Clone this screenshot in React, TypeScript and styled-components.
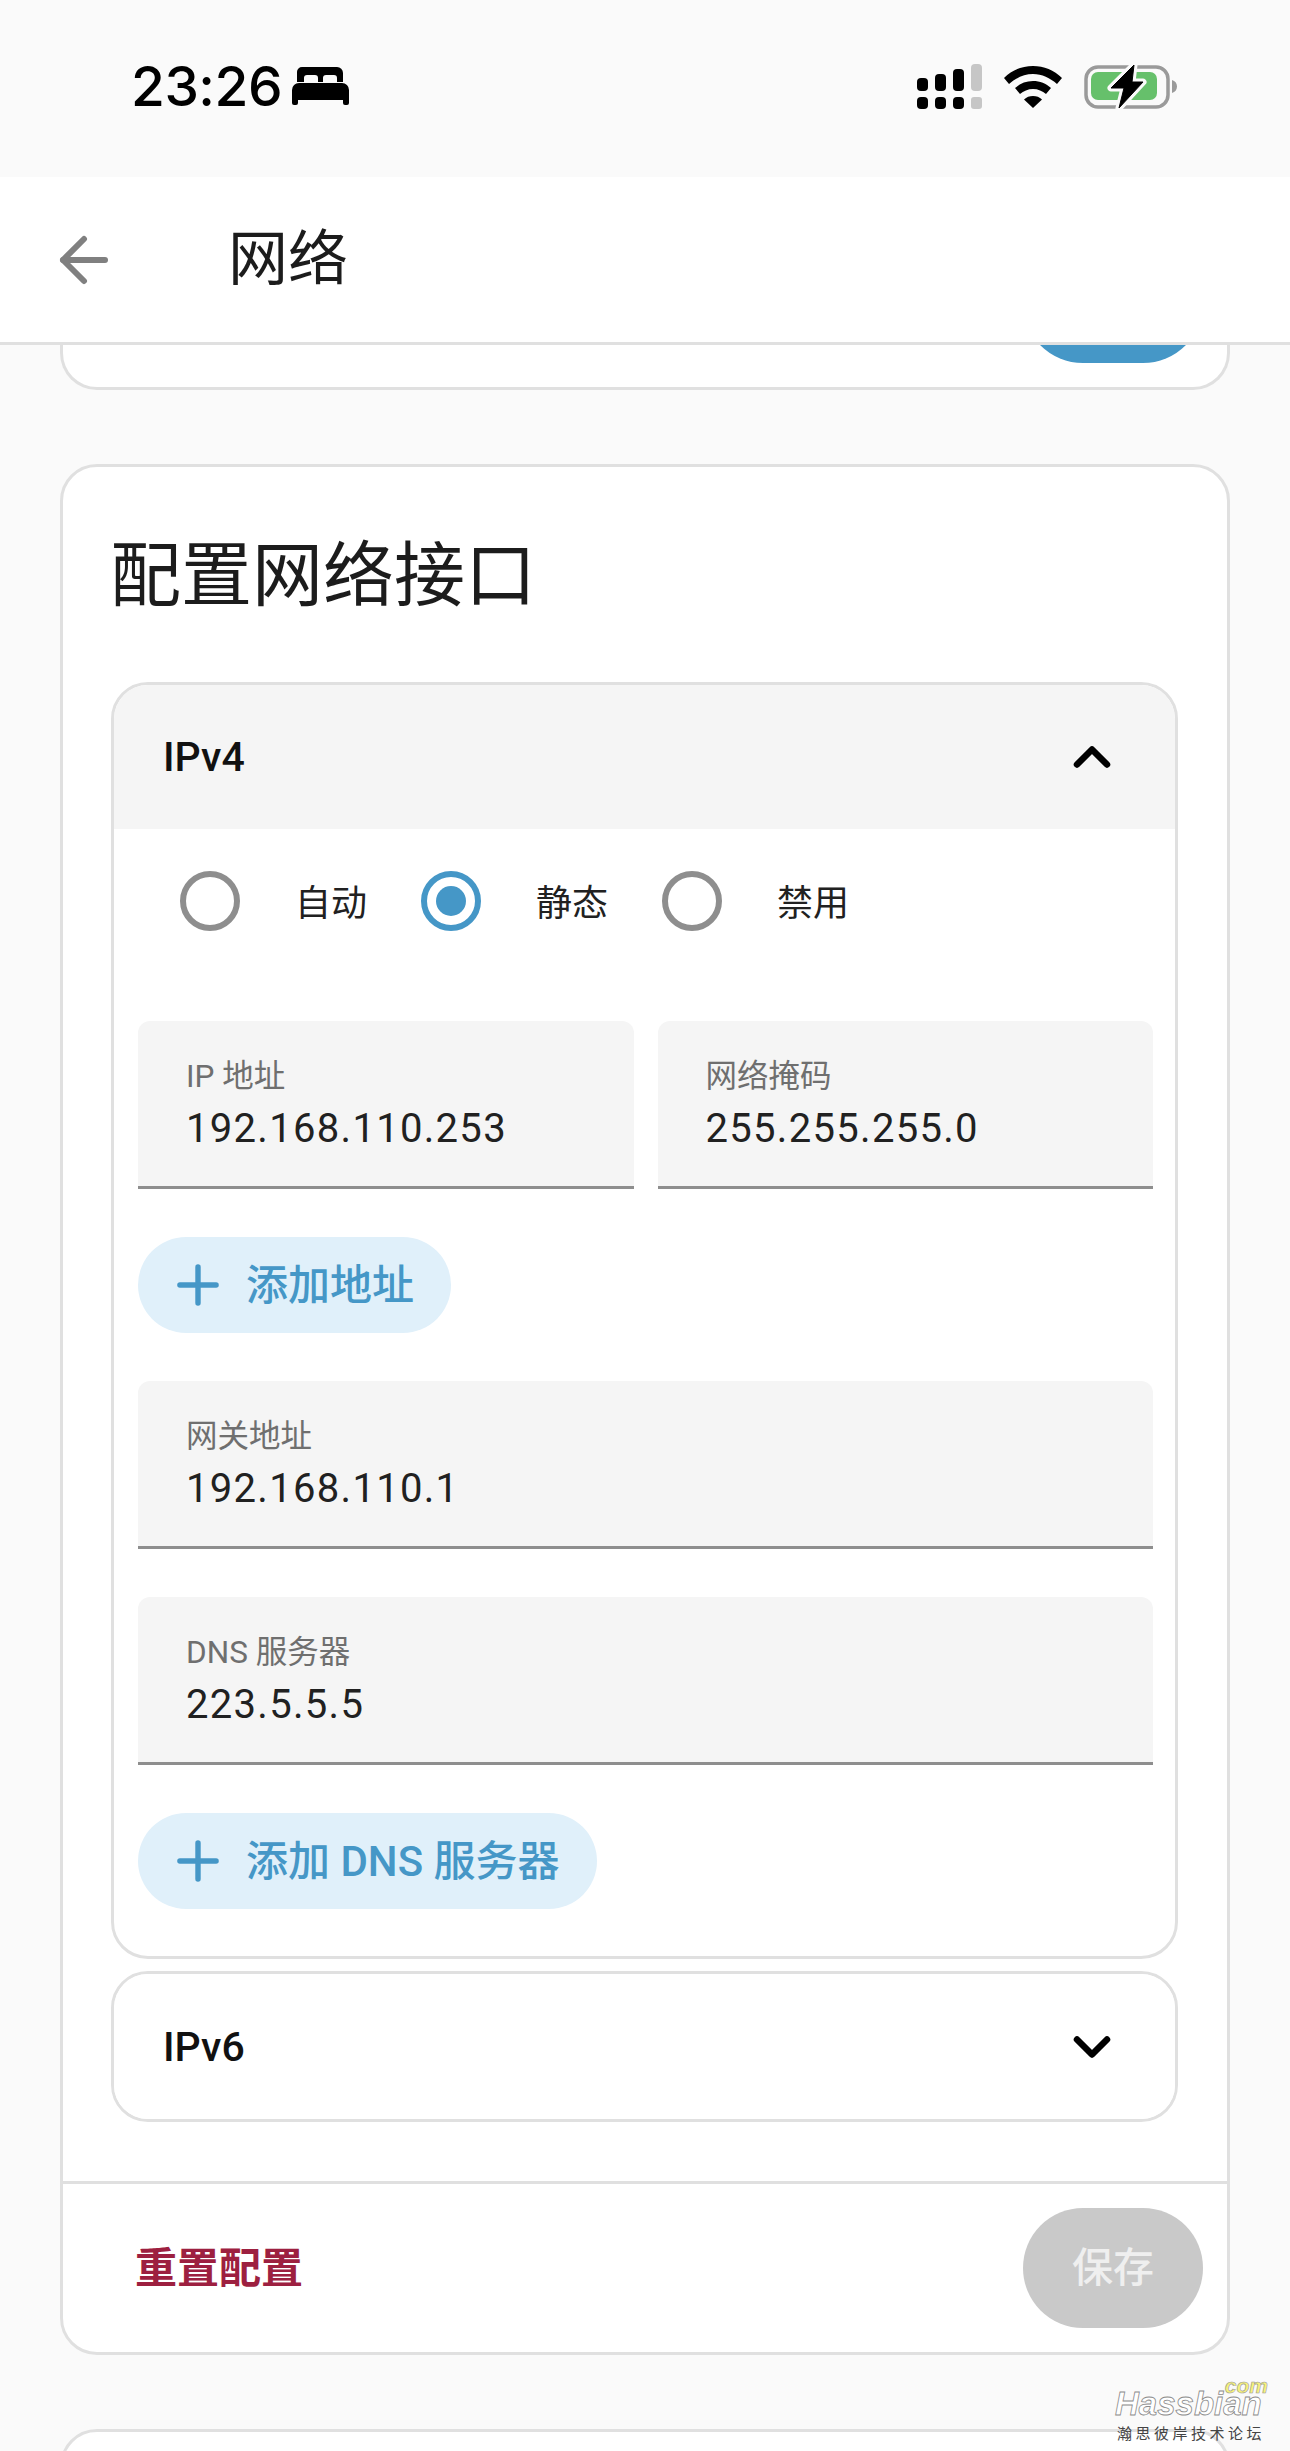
import styled, { createGlobalStyle } from "styled-components";
import { ArrowLeft, ChevronDown, ChevronUp, Plus } from "lucide-react";

const GlobalStyle = createGlobalStyle`
  html, body {
    margin: 0;
    padding: 0;
    background: #fafafa;
    font-family: Roboto, "Noto Sans CJK SC", sans-serif;
  }
  * { box-sizing: border-box; }
`;

const BedIcon = () => (
  <svg width="57" height="38" viewBox="0 0 57 38">
    <path
      fill="#000"
      fillRule="evenodd"
      d="M10 0h35a6 6 0 0 1 6 6v9h-6v-4a3 3 0 0 0-3-3H34a3 3 0 0 0-3 3v4h-5v-4a3 3 0 0 0-3-3H15a3 3 0 0 0-3 3v4H5V5a5 5 0 0 1 5-5z"
    />
    <path
      fill="#000"
      d="M7 16h43a7 7 0 0 1 7 7v13a2 2 0 0 1-2 2h-2a2 2 0 0 1-2-2v-3H6v3a2 2 0 0 1-2 2H2a2 2 0 0 1-2-2V23a7 7 0 0 1 7-7z"
    />
  </svg>
);

const SignalIcon = () => (
  <svg width="65" height="46" viewBox="0 0 65 46">
    <rect x="0" y="14" width="11" height="13" rx="4" fill="#000" />
    <rect x="18" y="10" width="11" height="17" rx="4" fill="#000" />
    <rect x="36" y="5" width="11" height="22" rx="4" fill="#000" />
    <rect x="54" y="0" width="11" height="27" rx="4" fill="#c6c6c6" />
    <rect x="0" y="33" width="11" height="12" rx="4" fill="#000" />
    <rect x="18" y="33" width="11" height="12" rx="4" fill="#000" />
    <rect x="36" y="33" width="11" height="12" rx="4" fill="#000" />
    <rect x="54" y="33" width="11" height="12" rx="3" fill="#c6c6c6" />
  </svg>
);

const WifiIcon = () => (
  <svg width="58" height="42" viewBox="0 0 58 42">
    <path fill="#000" d="M29 0c11 0 21 4 29 12l-5 6C46 12 38 8 29 8S12 12 5 18l-5-6C8 4 18 0 29 0z" />
    <path fill="#000" d="M29 15c7 0 13 2.500 18 7l-5 6c-3.500-3-8-5-13-5s-9.500 2-13 5l-5-6c5-4.500 11-7 18-7z" />
    <path fill="#000" d="M29 30c3.500 0 6.500 1 9 3.500L29 42l-9-8.500c2.500-2.500 5.500-3.500 9-3.500z" />
  </svg>
);

const BatteryIcon = () => (
  <svg width="93" height="46" viewBox="0 0 93 46">
    <rect x="2" y="3" width="82" height="40" rx="12" fill="none" stroke="#9a9a9a" strokeWidth="3.5" />
    <rect x="7" y="8" width="66" height="28" rx="7" fill="#66c06b" />
    <path fill="#9a9a9a" d="M88 16c3 1 5 3 5 6.500S91 28 88 29z" />
    <path
      fill="#fafafa"
      stroke="#fafafa"
      strokeWidth="7"
      strokeLinejoin="round"
      d="M50 1 27 24h13l-5 20 24-26H48z"
    />
    <path fill="#000" stroke="#000" strokeWidth="1" strokeLinejoin="round" d="M50 1 27 24h13l-5 20 24-26H48z" />
  </svg>
);

const Page = styled.div`
  width: 1290px;
  height: 2451px;
  position: relative;
  overflow: hidden;
  background: #fafafa;
`;

const StatusBar = styled.div`
  height: 177px;
  padding: 64px 113px 0 131px;
  display: flex;
  align-items: flex-start;
  justify-content: space-between;
  background: #fafafa;
`;

const TimeGroup = styled.div`
  display: flex;
  align-items: center;
  gap: 10px;
  height: 44px;
`;

const Clock = styled.span`
  font-family: Inter, sans-serif;
  font-size: 55px;
  font-weight: 500;
  letter-spacing: -0.5px;
  line-height: 46px;
  color: #000;
`;

const StatusIcons = styled.div`
  display: flex;
  align-items: center;
  gap: 22px;
  height: 46px;
`;

const TopBar = styled.header`
  height: 168px;
  display: flex;
  align-items: center;
  padding-left: 48px;
  background: #fff;
  border-bottom: 3px solid #e0e0e0;
`;

const BackIcon = styled(ArrowLeft)`
  width: 72px;
  height: 72px;
  color: #808080;
`;

const PageTitle = styled.h1`
  margin: 0 0 0 108px;
  font-size: 60px;
  font-weight: 400;
  line-height: 1;
  color: #1c1c1c;
`;

const Content = styled.main`
  display: flex;
  flex-direction: column;
  gap: 74px;
  padding: 0 60px;
`;

const Card = styled.section`
  width: 1170px;
  background: #fff;
  border: 3px solid #e0e0e0;
  border-radius: 37px;
`;

const ClippedCard = styled(Card)`
  height: 45px;
  border-top: none;
  border-radius: 0 0 37px 37px;
  display: flex;
  justify-content: flex-end;
  padding-right: 24px;
`;

const ClippedButton = styled.div`
  width: 180px;
  height: 18px;
  overflow: hidden;
  &::after {
    content: "";
    display: block;
    height: 120px;
    margin-top: -102px;
    border-radius: 60px;
    background: #4597c7;
  }
`;

const CardBody = styled.div`
  padding: 0 49px 0 48px;
  height: 1714px;
  display: flex;
  flex-direction: column;
`;

const CardTitle = styled.h2`
  margin: 0 0 11px -1px;
  height: 204px;
  display: flex;
  align-items: center;
  font-size: 71px;
  font-weight: 400;
  color: #1c1c1c;
`;

const Panel = styled.div`
  border: 3px solid #e0e0e0;
  border-radius: 37px;
  overflow: hidden;
  background: #fff;
  flex-shrink: 0;
`;

const PanelHeader = styled.div<{ $open?: boolean }>`
  height: ${(p) => (p.$open ? 144 : 145)}px;
  display: flex;
  align-items: center;
  justify-content: space-between;
  padding: 0 53px 0 49px;
  background: ${(p) => (p.$open ? "#f5f5f5" : "#fff")};
`;

const PanelLabel = styled.span`
  font-size: 41px;
  font-weight: 500;
  color: #111;
`;

const OpenIcon = styled(ChevronUp)`
  width: 60px;
  height: 60px;
  color: #000;
`;

const ClosedIcon = styled(ChevronDown)`
  width: 60px;
  height: 60px;
  color: #000;
`;

const PanelBody = styled.div`
  padding: 42px 22px 47px 24px;
  display: flex;
  flex-direction: column;
`;

const RadioRow = styled.div`
  display: flex;
  align-items: center;
  height: 60px;
  margin-bottom: 90px;
  padding-left: 42px;
`;

const RadioOption = styled.label`
  display: flex;
  align-items: center;
  width: 241px;
`;

const RadioDot = styled.span<{ $checked?: boolean }>`
  width: 60px;
  height: 60px;
  border-radius: 50%;
  border: 6px solid ${(p) => (p.$checked ? "#4597c7" : "#8e8e8e")};
  display: flex;
  align-items: center;
  justify-content: center;
  margin-right: 55px;
  &::after {
    content: "";
    width: 30px;
    height: 30px;
    border-radius: 50%;
    background: ${(p) => (p.$checked ? "#4597c7" : "transparent")};
  }
`;

const RadioText = styled.span`
  font-size: 36px;
  line-height: 50px;
  padding-top: 6px;
  color: #212121;
`;

const FieldRow = styled.div`
  display: flex;
  gap: 24px;
`;

const Field = styled.div`
  flex: 1 0 auto;
  height: 168px;
  padding: 31px 48px 0;
  background: #f5f5f5;
  border-bottom: 3px solid #8e8e8e;
  border-radius: 12px 12px 0 0;
  ${FieldRow} > & {
    flex: 1 1 0;
    min-width: 0;
  }
`;

const FieldLabel = styled.div`
  font-size: 31.5px;
  line-height: 50px;
  color: #6f6f6f;
`;

const FieldValue = styled.div`
  font-size: 40px;
  line-height: 54px;
  letter-spacing: 1.3px;
  color: #212121;
`;

const AddButton = styled.button<{ $gap: number }>`
  align-self: flex-start;
  height: 96px;
  margin: 48px 0 ${(p) => p.$gap}px;
  padding: 0 37px 0 29px;
  display: flex;
  align-items: center;
  gap: 17px;
  border: none;
  border-radius: 48px;
  background: #e0f0fa;
  color: #4597c7;
  font-family: inherit;
  font-size: 42px;
  font-weight: 500;
`;

const AddLabel = styled.span`
  padding-bottom: 8px;
`;

const AddIcon = styled(Plus)`
  width: 62px;
  height: 62px;
  color: #4597c7;
`;

const Spacer = styled.div<{ $h: number }>`
  height: ${(p) => p.$h}px;
  flex-shrink: 0;
`;

const CardFooter = styled.div`
  height: 171px;
  border-top: 3px solid #e0e0e0;
  padding: 0 24px 0 72px;
  display: flex;
  align-items: center;
  justify-content: space-between;
`;

const ResetText = styled.span`
  font-size: 42px;
  font-weight: 700;
  padding-bottom: 8px;
  color: #9d2040;
`;

const SaveButton = styled.button`
  width: 180px;
  height: 120px;
  padding: 0 0 9px;
  border: none;
  border-radius: 60px;
  background: #c9c9c9;
  color: #efefef;
  font-family: inherit;
  font-size: 41px;
  font-weight: 500;
`;

const NextCard = styled(Card)`
  height: 80px;
`;

const Watermark = styled.div`
  position: absolute;
  right: 22px;
  bottom: 7px;
  width: 153px;
`;

const WatermarkCom = styled.div`
  height: 12px;
  text-align: right;
  font: italic 700 21px/12px "Liberation Sans", sans-serif;
  color: #f7f27a;
  -webkit-text-stroke: 0.6px #999;
`;

const WatermarkName = styled.div`
  height: 24px;
  margin-bottom: 8px;
  font: italic 700 33px/24px "Liberation Sans", sans-serif;
  color: #fff;
  -webkit-text-stroke: 0.8px #8a8a8a;
`;

const WatermarkText = styled.div`
  padding-left: 2px;
  font-size: 15px;
  line-height: 20px;
  letter-spacing: 3.5px;
  white-space: nowrap;
  color: #444;
`;

export default function App() {
  return (
    <Page>
      <GlobalStyle />
      <StatusBar>
        <TimeGroup>
          <Clock>23:26</Clock>
          <BedIcon />
        </TimeGroup>
        <StatusIcons>
          <SignalIcon />
          <WifiIcon />
          <BatteryIcon />
        </StatusIcons>
      </StatusBar>
      <TopBar>
        <BackIcon strokeWidth={2} />
        <PageTitle>网络</PageTitle>
      </TopBar>
      <Content>
        <ClippedCard>
          <ClippedButton />
        </ClippedCard>
        <Card>
          <CardBody>
            <CardTitle>配置网络接口</CardTitle>
            <Panel>
              <PanelHeader $open>
                <PanelLabel>IPv4</PanelLabel>
                <OpenIcon strokeWidth={2.6} />
              </PanelHeader>
              <PanelBody>
                <RadioRow>
                  <RadioOption>
                    <RadioDot />
                    <RadioText>自动</RadioText>
                  </RadioOption>
                  <RadioOption>
                    <RadioDot $checked />
                    <RadioText>静态</RadioText>
                  </RadioOption>
                  <RadioOption>
                    <RadioDot />
                    <RadioText>禁用</RadioText>
                  </RadioOption>
                </RadioRow>
                <FieldRow>
                  <Field>
                    <FieldLabel>IP 地址</FieldLabel>
                    <FieldValue>192.168.110.253</FieldValue>
                  </Field>
                  <Field>
                    <FieldLabel>网络掩码</FieldLabel>
                    <FieldValue>255.255.255.0</FieldValue>
                  </Field>
                </FieldRow>
                <AddButton $gap={48}>
                  <AddIcon strokeWidth={2.1} />
                  <AddLabel>添加地址</AddLabel>
                </AddButton>
                <Field>
                  <FieldLabel>网关地址</FieldLabel>
                  <FieldValue>192.168.110.1</FieldValue>
                </Field>
                <Spacer $h={48} />
                <Field>
                  <FieldLabel>DNS 服务器</FieldLabel>
                  <FieldValue>223.5.5.5</FieldValue>
                </Field>
                <AddButton $gap={0}>
                  <AddIcon strokeWidth={2.1} />
                  <AddLabel>添加 DNS 服务器</AddLabel>
                </AddButton>
              </PanelBody>
            </Panel>
            <Spacer $h={12} />
            <Panel>
              <PanelHeader>
                <PanelLabel>IPv6</PanelLabel>
                <ClosedIcon strokeWidth={2.6} />
              </PanelHeader>
            </Panel>
          </CardBody>
          <CardFooter>
            <ResetText>重置配置</ResetText>
            <SaveButton>保存</SaveButton>
          </CardFooter>
        </Card>
        <NextCard />
      </Content>
      <Watermark>
        <WatermarkCom>com</WatermarkCom>
        <WatermarkName>Hassbian</WatermarkName>
        <WatermarkText>瀚思彼岸技术论坛</WatermarkText>
      </Watermark>
    </Page>
  );
}
